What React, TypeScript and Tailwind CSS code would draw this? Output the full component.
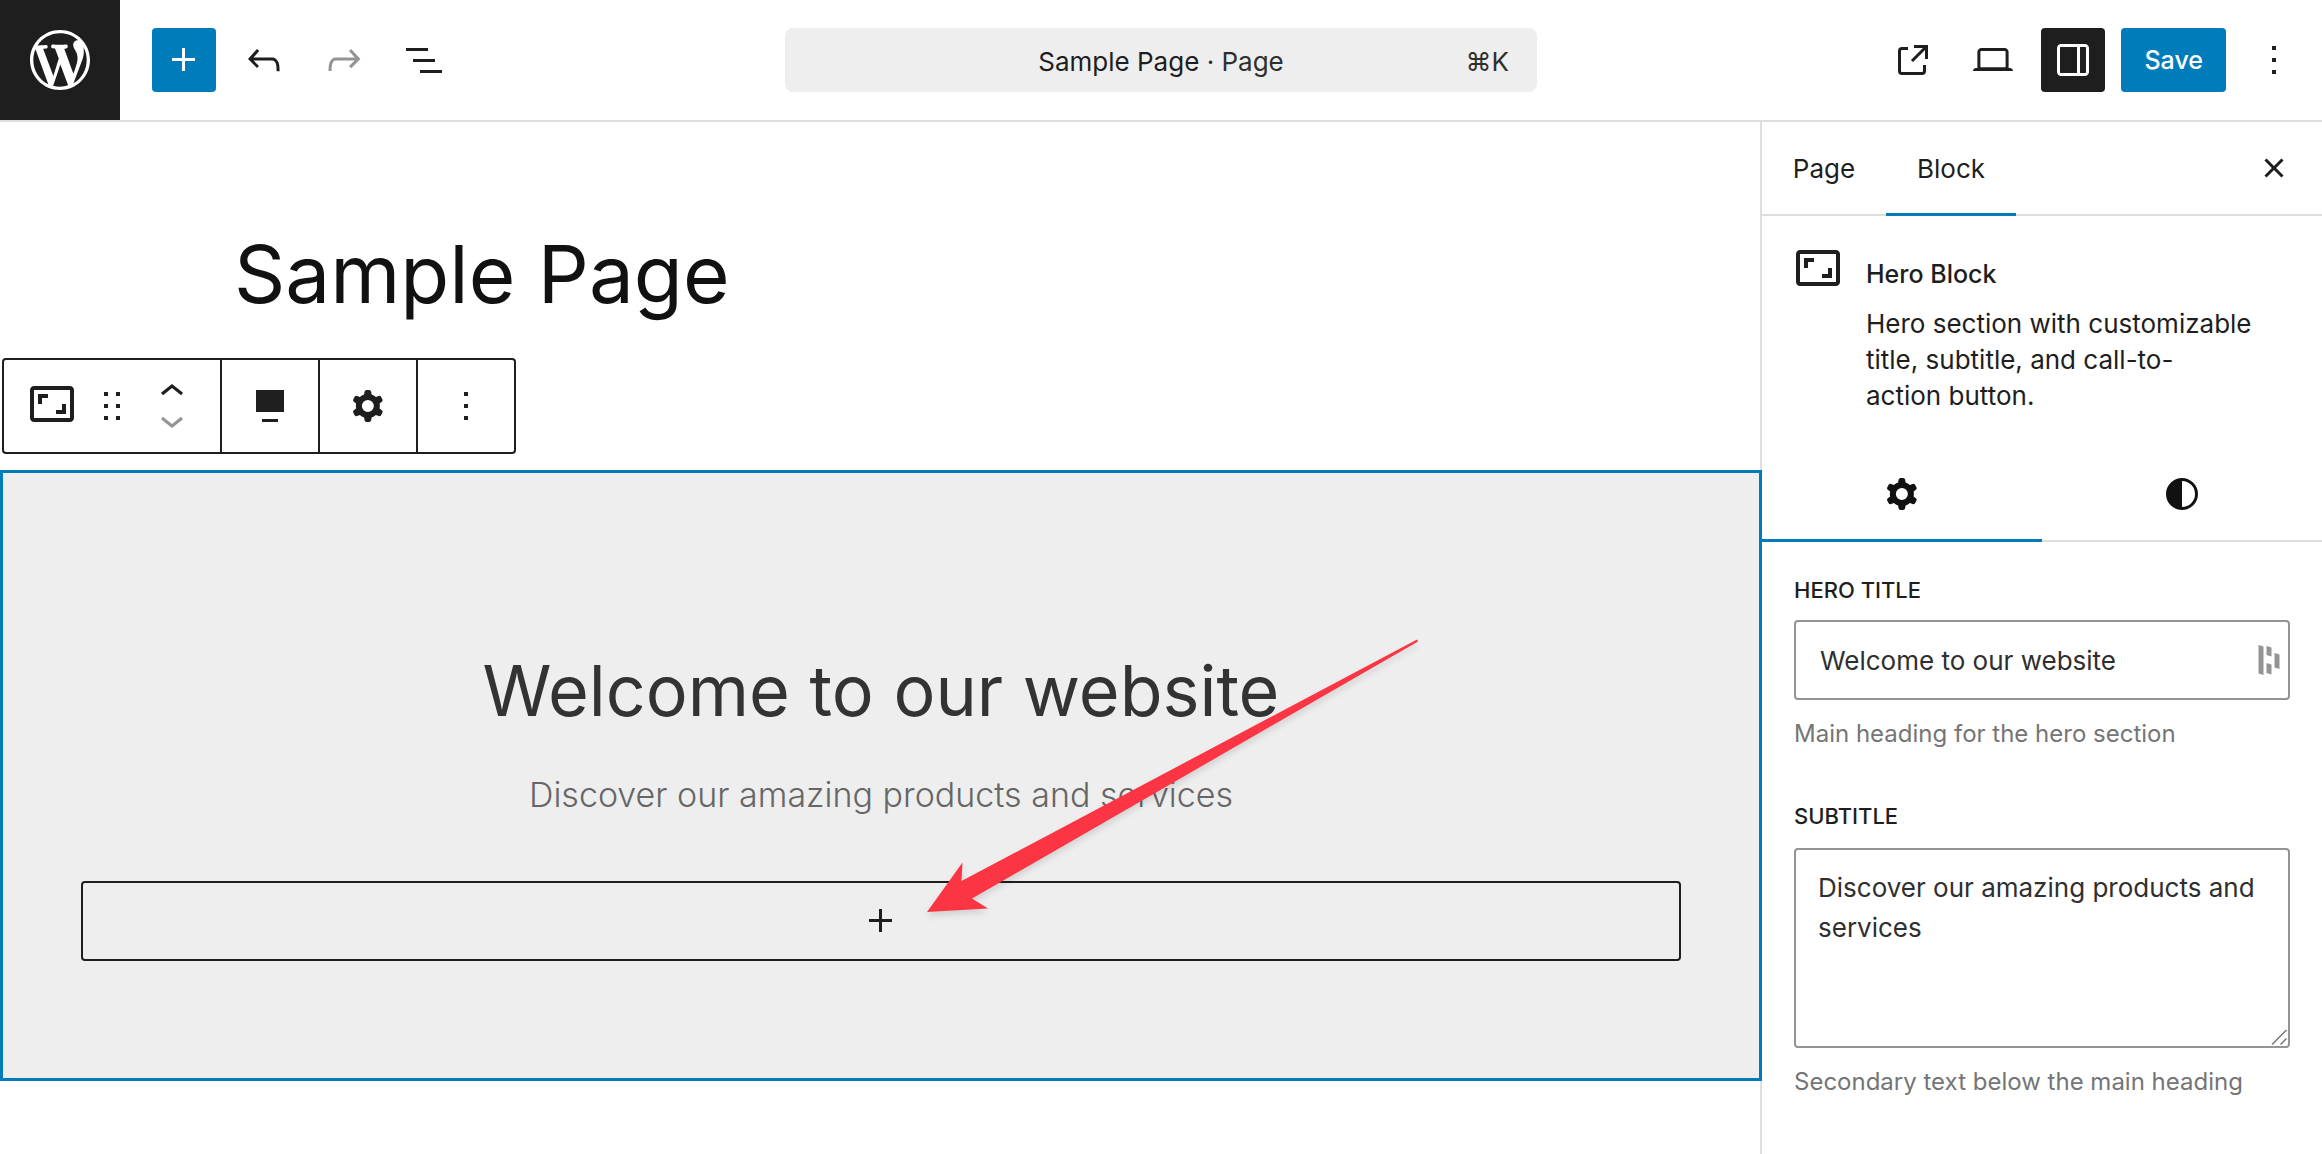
import type { ReactNode } from "react";

const PATHS = {
  wordpress:
    "M20 10c0-5.51-4.49-10-10-10C4.48 0 0 4.49 0 10c0 5.52 4.48 10 10 10 5.51 0 10-4.48 10-10zM7.78 15.37L4.37 6.22c.55-.02 1.17-.08 1.17-.08.5-.06.44-1.13-.06-1.11 0 0-1.45.11-2.37.11-.18 0-.37 0-.58-.01C4.12 2.69 6.87 1.11 10 1.11c2.33 0 4.45.87 6.05 2.34-.68-.11-1.65.39-1.65 1.58 0 .74.45 1.36.9 2.1.35.61.55 1.36.55 2.46 0 1.49-1.4 5-1.4 5l-3.03-8.37c.54-.02.82-.17.82-.17.5-.05.44-1.25-.06-1.22 0 0-1.44.12-2.38.12-.87 0-2.33-.12-2.33-.12-.5-.03-.56 1.2-.06 1.22l.92.08 1.26 3.41zM17.41 10c.24-.64.74-1.87.43-4.25.7 1.29 1.05 2.71 1.05 4.25 0 3.29-1.73 6.24-4.4 7.78.97-2.59 1.94-5.2 2.92-7.78zM6.1 18.09C3.12 16.65 1.11 13.53 1.11 10c0-1.3.23-2.48.72-3.59C3.25 10.3 4.67 14.2 6.1 18.09zm4.03-6.63l2.58 6.98c-.86.29-1.76.45-2.71.45-.79 0-1.57-.11-2.29-.33.81-2.38 1.62-4.74 2.42-7.1z",
  plus: "M11 12.5V17.5H12.5V12.5H17.5V11H12.5V6H11V11H6V12.5H11Z",
  undo: "M18.3 11.7c-.6-.6-1.4-.9-2.3-.9H6.7l2.9-3.3-1.1-1-4.5 5L8.5 16l1-1-2.7-2.7H16c.5 0 .9.2 1.3.5 1 1 1 3.4 1 4.5v.3h1.5v-.2c0-1.5 0-4.3-1.5-5.7z",
  redo: "M15.6 6.5l-1.1 1 2.9 3.3H8c-.9 0-1.7.3-2.3.9-1.4 1.5-1.4 4.2-1.4 5.6v.2h1.5v-.3c0-1.1 0-3.5 1-4.5.3-.3.7-.5 1.3-.5h9.2L14.5 15l1.1 1.1 4.6-4.6-4.6-5z",
  listView: "M3 6h11v1.5H3V6Zm3.5 5.5h11V13h-11v-1.5ZM21 17H10v1.5h11V17Z",
  external:
    "M19.5 4.5h-7V6h4.44l-5.97 5.97 1.06 1.06L18 7.06v4.44h1.5v-7Zm-13 1a2 2 0 0 0-2 2v10a2 2 0 0 0 2 2h10a2 2 0 0 0 2-2v-3H17v3a.5.5 0 0 1-.5.5h-10a.5.5 0 0 1-.5-.5v-10a.5.5 0 0 1 .5-.5h3V5.5h-3Z",
  desktop:
    "M20.5 16h-.7V8c0-1.1-.9-2-2-2H6.2c-1.1 0-2 .9-2 2v8h-.7c-.8 0-1.5.7-1.5 1.5h20c0-.8-.7-1.5-1.5-1.5zM5.7 8c0-.3.2-.5.5-.5h11.6c.3 0 .5.2.5.5v7.6H5.7V8z",
  drawer:
    "M18 4H6c-1.1 0-2 .9-2 2v12c0 1.1.9 2 2 2h12c1.1 0 2-.9 2-2V6c0-1.1-.9-2-2-2zm-4 14.5H6c-.3 0-.5-.2-.5-.5V6c0-.3.2-.5.5-.5h8v13zm4.5-.5c0 .3-.2.5-.5.5h-2.5v-13H18c.3 0 .5.2.5.5v12z",
  more: "M13 19h-2v-2h2v2zm0-6h-2v-2h2v2zm0-6h-2V5h2v2z",
  close:
    "M12 13.06l3.712 3.713 1.061-1.06L13.061 12l3.712-3.712-1.06-1.06L12 10.938 8.288 7.227l-1.061 1.06L10.939 12l-3.712 3.712 1.06 1.061L12 13.061z",
  aspect:
    "M19 12h-2v3h-3v2h5v-5zM7 9h3V7H5v5h2V9zm14-6H3c-1.1 0-2 .9-2 2v14c0 1.1.9 2 2 2h18c1.1 0 2-.9 2-2V5c0-1.1-.9-2-2-2zm0 16.01H3V4.99h18v14.02z",
  drag: "M8 7h2V5H8v2zm0 6h2v-2H8v2zm0 6h2v-2H8v2zm6-14v2h2V5h-2zm0 8h2v-2h-2v2zm0 6h2v-2h-2v2z",
  up: "M6.5 12.4L12 8l5.5 4.4-.9 1.2L12 10l-4.5 3.6-1-1.2z",
  down: "M17.5 11.6L12 16l-5.5-4.4.9-1.2L12 14l4.5-3.6 1 1.2z",
  fullWidth: "M5 4h14v11H5V4Zm11 16H8v-1.5h8V20Z",
  cog: "M10.289 4.836A1 1 0 0111.275 4h1.306a1 1 0 01.987.836l.244 1.466c.787.26 1.503.679 2.108 1.218l1.393-.522a1 1 0 011.216.437l.653 1.13a1 1 0 01-.23 1.273l-1.148.944a6.025 6.025 0 010 2.435l1.149.946a1 1 0 01.23 1.272l-.653 1.13a1 1 0 01-1.216.437l-1.394-.522c-.605.54-1.32.958-2.108 1.218l-.244 1.466a1 1 0 01-.987.836h-1.306a1 1 0 01-.986-.836l-.244-1.466a5.995 5.995 0 01-2.108-1.218l-1.394.522a1 1 0 01-1.217-.436l-.653-1.131a1 1 0 01.23-1.272l1.149-.946a6.026 6.026 0 010-2.435l-1.148-.944a1 1 0 01-.23-1.272l.653-1.131a1 1 0 011.217-.437l1.393.522a5.994 5.994 0 012.108-1.218l.244-1.466zM14.929 12a3 3 0 11-6 0 3 3 0 016 0z",
  styles:
    "M20 12a8 8 0 1 1-16 0 8 8 0 0 1 16 0Zm-1.5 0a6.5 6.5 0 0 1-6.5 6.5v-13a6.5 6.5 0 0 1 6.5 6.5Z",
};

function Icon({ name, className = "" }: { name: keyof typeof PATHS; className?: string }) {
  return (
    <svg viewBox="0 0 24 24" className={`size-12 shrink-0 fill-current ${className}`} aria-hidden="true">
      <path d={PATHS[name]} fillRule="evenodd" clipRule="evenodd" />
    </svg>
  );
}

function IconButton({
  label,
  className = "",
  disabled,
  children,
}: {
  label: string;
  className?: string;
  disabled?: boolean;
  children: ReactNode;
}) {
  return (
    <button
      type="button"
      aria-label={label}
      disabled={disabled}
      className={`flex size-16 shrink-0 items-center justify-center rounded-sm ${className}`}
    >
      {children}
    </button>
  );
}

function Header() {
  return (
    <header className="grid grid-cols-[1fr_752px_1fr] items-center border-b-2 border-[#dddddd] text-[#1e1e1e]">
      <div className="flex items-center gap-4">
        <a href="#dashboard" aria-label="View Pages" className="mr-4 flex size-[120px] shrink-0 items-center justify-center bg-[#1e1e1e] text-white">
          <svg viewBox="-2 -2 24 24" className="size-[72px] fill-current" aria-hidden="true">
            <path d={PATHS.wordpress} />
          </svg>
        </a>
        <IconButton label="Block Inserter" className="bg-[#007cba] text-white">
          <Icon name="plus" />
        </IconButton>
        <IconButton label="Undo">
          <Icon name="undo" />
        </IconButton>
        <IconButton label="Redo" disabled className="text-[#949494]">
          <Icon name="redo" />
        </IconButton>
        <IconButton label="Document Overview">
          <Icon name="listView" />
        </IconButton>
      </div>
      <button type="button" className="grid h-16 grid-cols-[1fr_auto_1fr] items-center rounded-lg bg-[#eeeeee] px-7 pt-0.5 text-[26px]">
        <span className="col-start-2">
          Sample Page <span className="text-[#2f2f2f]">· Page</span>
        </span>
        <span className="text-right text-[#2f2f2f]">⌘K</span>
      </button>
      <div className="flex justify-end gap-4 pr-4">
        <IconButton label="View Page">
          <Icon name="external" />
        </IconButton>
        <IconButton label="Preview">
          <Icon name="desktop" />
        </IconButton>
        <IconButton label="Settings" className="bg-[#1e1e1e] text-white">
          <Icon name="drawer" />
        </IconButton>
        <button type="button" className="h-16 rounded-sm bg-[#007cba] px-[23px] pt-0.5 text-[25px] font-medium text-white">
          Save
        </button>
        <IconButton label="Options">
          <Icon name="more" />
        </IconButton>
      </div>
    </header>
  );
}

function BlockToolbar() {
  return (
    <div role="toolbar" aria-label="Block tools" className="ml-0.5 flex h-24 w-fit divide-x-2 divide-[#1e1e1e] rounded-sm border-2 border-[#1e1e1e] bg-white text-[#1e1e1e]">
      <div className="flex items-center gap-3 px-6">
        <button type="button" aria-label="Hero Block" className="pb-1">
          <Icon name="aspect" />
        </button>
        <button type="button" aria-label="Drag">
          <Icon name="drag" />
        </button>
        <div className="flex flex-col">
          <button type="button" aria-label="Move up" className="flex h-7 items-end overflow-hidden">
            <Icon name="up" className="-mb-2.5" />
          </button>
          <button type="button" aria-label="Move down" disabled className="flex h-7 items-start overflow-hidden text-[#949494]">
            <Icon name="down" className="-mt-2.5" />
          </button>
        </div>
      </div>
      <button type="button" aria-label="Align" className="flex w-[98px] items-center justify-center">
        <Icon name="fullWidth" />
      </button>
      <button type="button" aria-label="Settings" className="flex w-[98px] items-center justify-center">
        <Icon name="cog" />
      </button>
      <button type="button" aria-label="Options" className="flex w-24 items-center justify-center">
        <Icon name="more" />
      </button>
    </div>
  );
}

function Arrow() {
  return (
    <svg
      viewBox="0 0 510 290"
      className="pointer-events-none absolute top-[160px] left-1/2 ml-[36px] h-[290px] w-[510px] drop-shadow-[0_4px_3px_rgba(0,0,0,0.12)]"
      aria-hidden="true"
    >
      <path d="M500 6.500 L44.500 248 L45.500 229.500 L10 279 L71 275.500 L55 265.500 L501 8.500 Z" fill="#fb3543" />
    </svg>
  );
}

function Canvas() {
  return (
    <main className="min-w-0 flex-1 pt-[102px]">
      <h1 className="pl-[234px] text-[80px] leading-[100px] text-[#111111]">Sample Page</h1>
      <div className="mt-[34px] mb-4">
        <BlockToolbar />
      </div>
      <section className="relative z-10 -mr-0.5 border-[3px] border-[#007cba] bg-[#eeeeee] px-[78px] pt-[178px] pb-[117px] text-center">
        <h2 className="text-[70px] leading-20 text-[#333333]">Welcome to our website</h2>
        <p className="mt-9 text-[34px] leading-14 font-light text-[#666666]">Discover our amazing products and services</p>
        <button type="button" aria-label="Add block" className="mt-[58px] flex h-20 w-full items-center justify-center rounded-sm border-2 border-[#1e1e1e] text-[#1e1e1e]">
          <Icon name="plus" />
        </button>
        <Arrow />
      </section>
    </main>
  );
}

function Sidebar() {
  return (
    <aside className="w-[562px] shrink-0 border-l-2 border-[#dddddd] text-[26px] text-[#1e1e1e]">
      <div className="flex h-[94px] border-b-2 border-[#dddddd] pr-4">
        <button type="button" className="w-31">
          Page
        </button>
        <button type="button" className="-mb-0.5 w-[130px] border-b-[3px] border-[#007cba] pt-px">
          Block
        </button>
        <div className="ml-auto flex items-center">
          <IconButton label="Close Settings">
            <Icon name="close" />
          </IconButton>
        </div>
      </div>

      <div className="flex gap-6 px-8 pt-7">
        <Icon name="aspect" />
        <div>
          <h2 className="pt-3 text-[25px] leading-9 font-medium">Hero Block</h2>
          <p className="mt-3.5 leading-9">
            Hero section with customizable title, subtitle, and call-to-
            <br />
            action button.
          </p>
        </div>
      </div>

      <div className="mt-8 flex h-24 border-b-2 border-[#dddddd] text-[#111111]">
        <button type="button" aria-label="Settings" className="-mb-0.5 flex flex-1 items-center justify-center border-b-[3px] border-[#007cba] pt-[3px]">
          <Icon name="cog" />
        </button>
        <button type="button" aria-label="Styles" className="flex flex-1 items-center justify-center pt-0.5">
          <Icon name="styles" />
        </button>
      </div>

      <div className="px-8 pt-8">
        <label htmlFor="hero-title" className="block text-[22px] leading-8 font-medium uppercase">
          Hero Title
        </label>
        <div className="relative mt-3.5">
          <input
            id="hero-title"
            type="text"
            defaultValue="Welcome to our website"
            className="h-20 w-full rounded-sm border-2 border-[#949494] pr-12 pl-6 text-[#2f2f2f]"
          />
          <svg viewBox="0 0 22 30" className="absolute top-[25px] right-2.5 h-[30px] w-[22px] fill-[#949494]" aria-hidden="true">
            <path d="M0.500 0 L5.500 1.500 V30 L0.500 28.500 Z M8.500 1 L13.500 2.500 V11.500 L8.500 10 Z M8.500 18 L13.500 19.500 V29.500 L8.500 28 Z M16.500 8 L21.500 9.500 V24 L16.500 22.500 Z" />
          </svg>
        </div>
        <p className="mt-4 text-[24px] leading-9 text-[#757575]">Main heading for the hero section</p>

        <label htmlFor="hero-subtitle" className="mt-12 block text-[22px] leading-8 font-medium uppercase">
          Subtitle
        </label>
        <div className="relative mt-4">
          <textarea
            id="hero-subtitle"
            defaultValue="Discover our amazing products and services"
            className="block h-[200px] w-full resize-none rounded-sm border-2 border-[#949494] px-[22px] py-[18px] leading-10 text-[#2f2f2f]"
          />
          <svg viewBox="0 0 16 16" className="absolute right-[3px] bottom-[3px] size-4 stroke-[#757575]" fill="none" strokeWidth="1.5" aria-hidden="true">
            <path d="M1 15.500 L15.500 1 M9.500 15.500 L15.500 9.500" />
          </svg>
        </div>
        <p className="mt-4 text-[24px] leading-9 text-[#757575]">Secondary text below the main heading</p>
      </div>
    </aside>
  );
}

export default function App() {
  return (
    <div className="flex min-h-screen flex-col bg-white font-['Inter','Noto_Sans',sans-serif]">
      <Header />
      <div className="flex flex-1">
        <Canvas />
        <Sidebar />
      </div>
    </div>
  );
}
